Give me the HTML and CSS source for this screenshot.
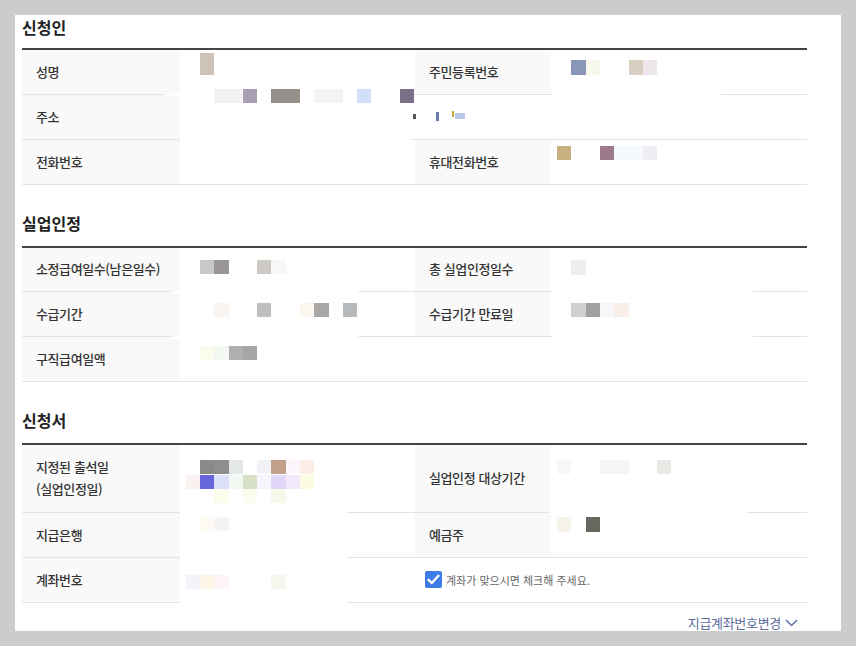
FILE: index.html
```html
<!DOCTYPE html>
<html lang="ko">
<head>
    <meta charset="UTF-8">
    <meta name="viewport" content="width=device-width, initial-scale=1.0">
    <title>실업인정 신청서</title>
    <link rel="stylesheet" href="styles.css">
</head>
<body>
    <div class="panel">
        <!-- 신청인 -->
        <section class="block">
            <h3 class="block-title">신청인</h3>
            <table class="info">
                <colgroup>
                    <col class="c-label"><col class="c-value"><col class="c-label2"><col>
                </colgroup>
                <tr>
                    <th>성명</th><td></td>
                    <th>주민등록번호</th><td></td>
                </tr>
                <tr>
                    <th>주소</th><td colspan="3"></td>
                </tr>
                <tr>
                    <th>전화번호</th><td></td>
                    <th>휴대전화번호</th><td></td>
                </tr>
            </table>
        </section>

        <!-- 실업인정 -->
        <section class="block">
            <h3 class="block-title">실업인정</h3>
            <table class="info">
                <colgroup>
                    <col class="c-label"><col class="c-value"><col class="c-label2"><col>
                </colgroup>
                <tr>
                    <th>소정급여일수(남은일수)</th><td></td>
                    <th>총 실업인정일수</th><td></td>
                </tr>
                <tr>
                    <th>수급기간</th><td></td>
                    <th>수급기간 만료일</th><td></td>
                </tr>
                <tr>
                    <th>구직급여일액</th><td colspan="3"></td>
                </tr>
            </table>
        </section>

        <!-- 신청서 -->
        <section class="block">
            <h3 class="block-title">신청서</h3>
            <table class="info">
                <colgroup>
                    <col class="c-label"><col class="c-value"><col class="c-label2"><col>
                </colgroup>
                <tr class="tall">
                    <th>지정된 출석일<br>(실업인정일)</th><td></td>
                    <th>실업인정 대상기간</th><td></td>
                </tr>
                <tr>
                    <th>지급은행</th><td></td>
                    <th>예금주</th><td></td>
                </tr>
                <tr>
                    <th>계좌번호</th><td></td>
                    <td colspan="2" class="check-cell">
                        <label class="check">
                            <span class="check-box">
                                <svg width="13" height="11" viewBox="0 0 13 11"><path d="M1.5 5.8 L4.8 9 L11.5 1.8" fill="none" stroke="#fff" stroke-width="2.4" stroke-linecap="round" stroke-linejoin="round"/></svg>
                            </span>
                            계좌가 맞으시면 체크해 주세요.
                        </label>
                    </td>
                </tr>
            </table>
        </section>

        <div class="more">
            <a href="#">지급계좌번호변경
                <svg width="13" height="8" viewBox="0 0 13 8"><path d="M1 1.2 L6.5 6.5 L12 1.2" fill="none" stroke="#6478aa" stroke-width="1.6"/></svg>
            </a>
        </div>

        <!-- 개인정보 가림 처리 -->
        <div class="mosaic" id="mosaic"></div>
    </div>

    <script>
        // 가림 타일 (페이지 좌표: x, y, 너비, 높이, 색)
        const tiles = [
            // 선 가림
            [165, 93, 235, 3, "#fff"], [180, 138, 230, 3, "#fff"], [552, 93, 169, 3, "#fff"],
            [172, 291, 186, 3, "#fff"], [172, 336, 186, 3, "#fff"],
            [552, 291, 201, 3, "#fff"], [552, 336, 201, 3, "#fff"],
            [180, 512, 167, 3, "#fff"], [180, 557, 167, 3, "#fff"], [180, 602, 167, 3, "#fff"],
            [550, 512, 197, 3, "#fff"],
            // 신청인
            [200, 53, 14, 22, "#cdc3b8"],
            [214, 89, 28, 14, "#f2f2f2"], [243, 89, 14, 14, "#a9a0b4"], [271, 89, 29, 14, "#96908b"],
            [314, 89, 29, 14, "#f4f4f4"], [357, 89, 14, 14, "#cfe0f8"], [400, 89, 14, 14, "#7a6f86"],
            [413, 114, 3, 5, "#555"], [436, 112, 3, 9, "#6a78b0"], [452, 111, 2, 6, "#c8a040"],
            [455, 113, 10, 6, "#b8c8e8"],
            [571, 60, 15, 15, "#8896b8"], [586, 60, 14, 15, "#f7f7ee"], [629, 60, 14, 15, "#d8cfc0"],
            [643, 60, 14, 15, "#ede6ea"],
            [557, 146, 14, 14, "#c8b282"], [600, 146, 14, 14, "#9d7a8a"], [614, 146, 29, 14, "#f5f8fc"],
            [643, 146, 14, 14, "#eeeef2"],
            // 실업인정
            [200, 260, 14, 14, "#c8c8c8"], [214, 260, 15, 14, "#9a9596"], [257, 260, 14, 14, "#cdc9c4"],
            [271, 260, 15, 14, "#f5f8f5"],
            [214, 303, 15, 14, "#faf4f0"], [257, 303, 14, 14, "#bfbfbf"], [300, 303, 14, 14, "#fbf6ee"],
            [314, 303, 15, 14, "#a8a7a5"], [343, 303, 14, 14, "#b7babd"],
            [200, 346, 14, 14, "#fbfbee"], [214, 346, 15, 14, "#f3f8f3"], [229, 346, 14, 14, "#b0b0b0"],
            [243, 346, 14, 14, "#a6a6a6"],
            [571, 260, 15, 15, "#eeeeee"],
            [571, 303, 15, 14, "#d0d0d0"], [586, 303, 14, 14, "#a0a0a0"], [600, 303, 14, 14, "#f7f7f7"],
            [614, 303, 15, 14, "#faefe8"],
            // 신청서
            [200, 460, 14, 14, "#8a8a8a"], [214, 460, 15, 14, "#8e8e8e"], [229, 460, 14, 14, "#e3e8e6"],
            [257, 460, 14, 14, "#f0f2f6"], [271, 460, 15, 14, "#c19f88"], [286, 460, 14, 14, "#fcf6fc"],
            [300, 460, 14, 14, "#fcede6"],
            [186, 475, 14, 14, "#faf2f0"], [200, 475, 14, 14, "#6666dd"], [214, 475, 15, 14, "#dde0fa"],
            [229, 475, 14, 14, "#f2f9f2"], [243, 475, 14, 14, "#d8e0c8"], [257, 475, 14, 14, "#f6f4fe"],
            [271, 475, 15, 14, "#e0d6fa"], [286, 475, 14, 14, "#f0eafc"], [300, 475, 14, 14, "#fcfce0"],
            [214, 489, 15, 14, "#fcfcea"], [243, 489, 14, 14, "#fbfbee"], [271, 489, 15, 14, "#f6f8ea"],
            [200, 517, 14, 14, "#fcfaf2"], [214, 517, 15, 14, "#f4f4f4"],
            [186, 575, 14, 14, "#f2f4f9"], [200, 575, 14, 14, "#fbf6e6"], [214, 575, 15, 14, "#fdf4f6"],
            [271, 575, 15, 14, "#f3f7ee"],
            [557, 460, 14, 14, "#f8f8f8"], [600, 460, 29, 14, "#f5f5f5"], [657, 460, 14, 14, "#e9e8e4"],
            [557, 517, 14, 15, "#f7f3ec"], [586, 517, 14, 15, "#676860"]
        ];

        const mosaic = document.getElementById("mosaic");
        tiles.forEach(function (t) {
            const el = document.createElement("span");
            el.className = "tile";
            el.style.left = (t[0] - 15) + "px";
            el.style.top = (t[1] - 15) + "px";
            el.style.width = t[2] + "px";
            el.style.height = t[3] + "px";
            el.style.background = t[4];
            mosaic.appendChild(el);
        });
    </script>
</body>
</html>
```

FILE: styles.css
```css
/* 기본 */
body {
    margin: 0;
    padding: 15px;
    background-color: #cccccc;
    font-family: "Noto Sans CJK KR", "Noto Sans", sans-serif;
    color: #333;
}

.panel {
    position: relative;
    width: 826px;
    height: 616px;
    overflow: hidden;
    background: #fff;
    padding: 0 34px 0 7px;
    box-sizing: border-box;
}

/* 섹션 */
.block {
    margin-top: 26px;
}

.block:first-child {
    margin-top: 0;
}

.block-title {
    margin: 0 0 11px 0;
    font-size: 16px;
    line-height: 24px;
    font-weight: bold;
    color: #222;
}

.block:first-child .block-title {
    margin-bottom: 9px;
}

/* 정보 테이블 */
.info {
    width: 785px;
    border-collapse: collapse;
    table-layout: fixed;
    border-top: 2px solid #444;
}

.info .c-label {
    width: 158px;
}

.info .c-value {
    width: 235px;
}

.info .c-label2 {
    width: 136px;
}

.info tr {
    height: 45px;
    border-bottom: 1px solid #e4e4e4;
}

.info tr.tall {
    height: 68px;
}

.info th {
    background: #f9f9f9;
    padding: 0 0 0 14px;
    text-align: left;
    font-size: 13px;
    font-weight: 500;
    line-height: 22px;
    letter-spacing: -0.4px;
    color: #333;
}

.info td {
    padding: 0;
}

/* 체크박스 */
.check-cell {
    padding-left: 10px !important;
}

.check {
    display: flex;
    align-items: center;
    gap: 4px;
    font-size: 11px;
    color: #666;
}

.check-box {
    display: flex;
    align-items: center;
    justify-content: center;
    width: 17px;
    height: 17px;
    border-radius: 2px;
    background: #3d7be6;
}

/* 계좌번호 변경 */
.more {
    margin-top: 6px;
    width: 785px;
    text-align: right;
}

.more a {
    display: inline-flex;
    align-items: center;
    gap: 4px;
    margin-right: 9px;
    font-size: 13px;
    line-height: 18px;
    letter-spacing: -0.3px;
    color: #5a6c9c;
    text-decoration: none;
}

/* 가림 처리 */
.mosaic {
    position: absolute;
    inset: 0;
    pointer-events: none;
}

.tile {
    position: absolute;
}
```
